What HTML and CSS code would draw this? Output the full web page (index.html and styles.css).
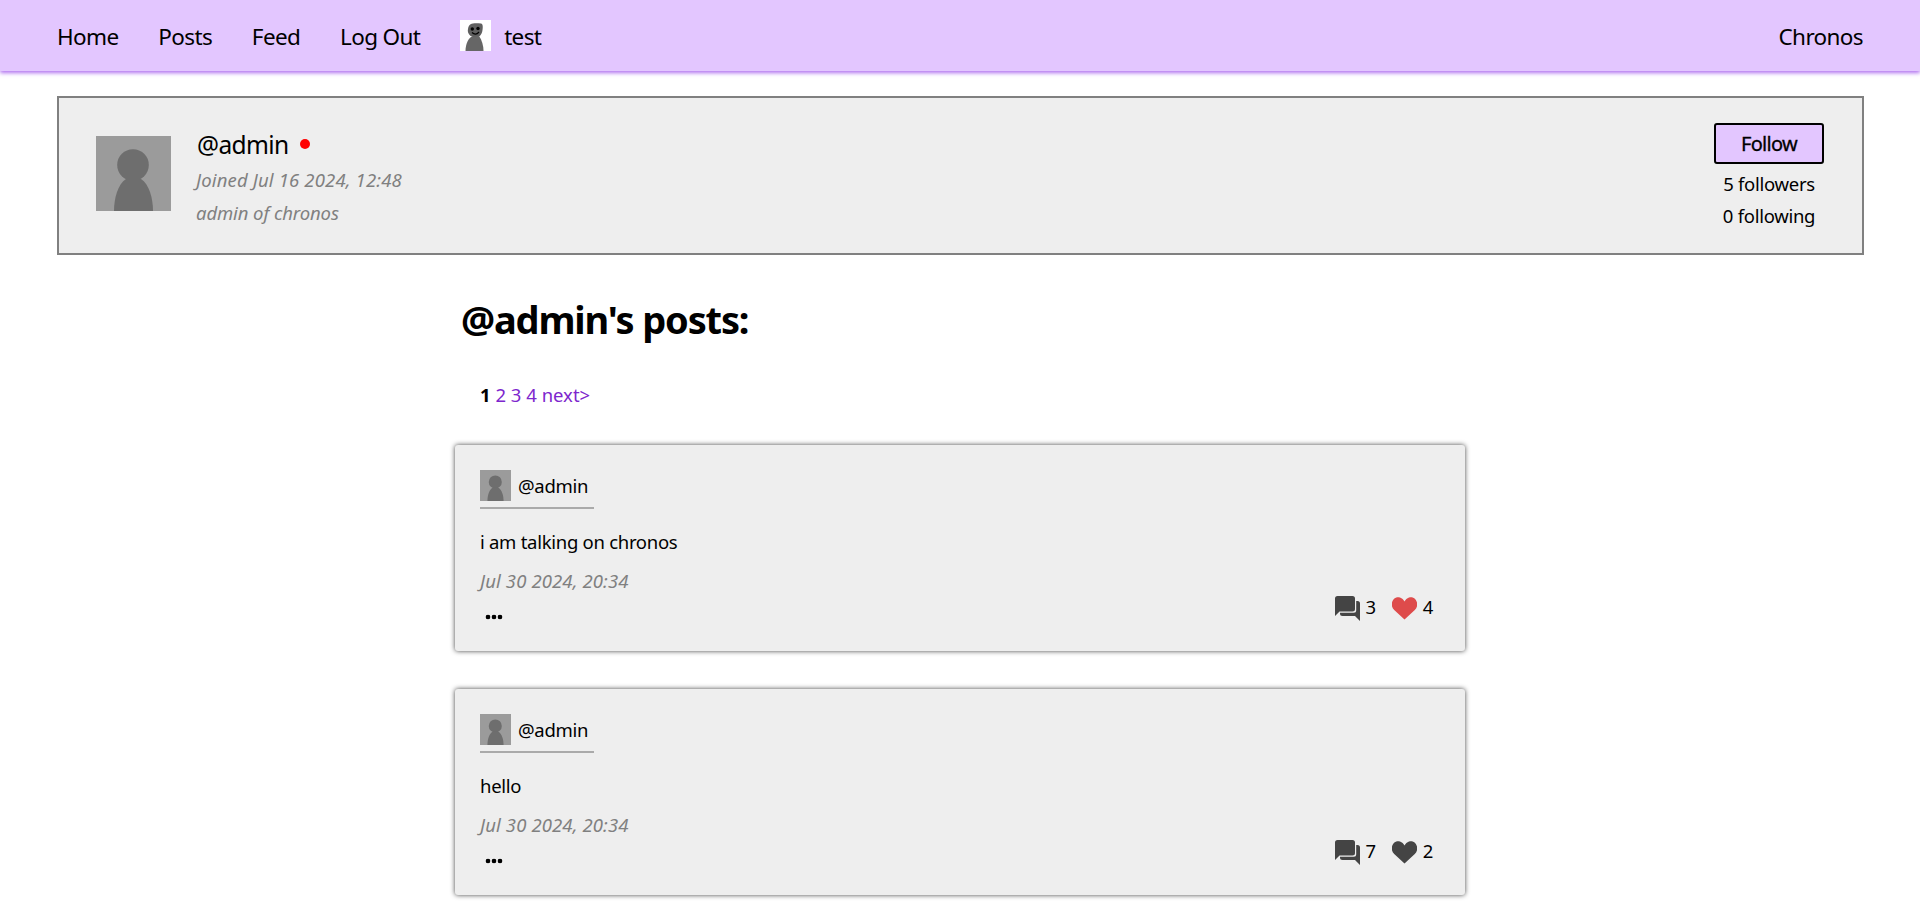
FILE: index.html
```html
<!DOCTYPE html>
<html lang="en">
<head>
<meta charset="utf-8">
<title>Chronos</title>
<link rel="stylesheet" href="styles.css">
</head>
<body>
<svg class="defs" aria-hidden="true">
  <symbol id="person" viewBox="0 0 75 75">
    <rect width="75" height="75" fill="#9b9b9b"/>
    <circle cx="37" cy="29" r="15.800" fill="#6e6e6e"/>
    <path d="M30 43C22 48 18 62 18 75H57C57 62 53 48 45 43Z" fill="#6e6e6e"/>
  </symbol>
  <symbol id="forum" viewBox="0 0 25 25">
    <path d="M2.500 0H17.500Q20 0 20 2.500V13Q20 15.500 17.500 15.500H4.500L0 20V2.500Q0 0 2.500 0Z"/>
    <path d="M21.200 5H22.500Q25 5 25 7.500V25L20 20H7.500Q5 20 5 17.500V16.700H18.700Q21.200 16.700 21.200 14.200Z"/>
  </symbol>
  <symbol id="heart" viewBox="0 0 25 23">
    <path d="M12.500 22.500L2.200 13.100C-3.600 7 2-1.800 8 .6C10 1.400 11.500 2.700 12.500 4.600C13.500 2.700 15 1.400 17 .6C23-1.800 28.600 7 22.800 13.100Z"/>
  </symbol>
</svg>
<header class="nav">
  <nav class="nav-links">
    <a>Home</a>
    <a>Posts</a>
    <a>Feed</a>
    <a>Log Out</a>
    <a class="nav-user">
      <svg class="nav-avatar" viewBox="0 0 31 31">
        <rect width="31" height="31" fill="#fff"/>
        <path d="M8 9C9 3 13 3 21 3.500C23 4 23 7 22.500 10C22 15 19 17.500 15 17.500C10 17 7 13 8 9Z" fill="#5f5f5f"/>
        <path d="M11 17C7 20 5.500 26 5.500 31H23.500C23.500 26 22 20 19 16Z" fill="#666"/>
        <circle cx="12.300" cy="9" r="1.700"/><circle cx="18" cy="8.500" r="1.700"/>
        <path d="M12 12.500Q15.500 16 19 12" fill="none" stroke="#000" stroke-width="1.200"/>
      </svg>
      <span>test</span>
    </a>
  </nav>
  <a class="brand">Chronos</a>
</header>
<section class="profile">
  <svg class="profile-avatar"><use href="#person"/></svg>
  <div class="profile-info">
    <div class="profile-name"><span>@admin</span><i class="status"></i></div>
    <p class="joined">Joined Jul 16 2024, 12:48</p>
    <p class="bio">admin of chronos</p>
  </div>
  <div class="profile-side">
    <button class="follow">Follow</button>
    <p class="followers">5 followers</p>
    <p class="following">0 following</p>
  </div>
</section>
<main class="posts">
  <h1>@admin's posts:</h1>
  <div class="pages"><b>1</b> <a>2</a> <a>3</a> <a>4</a> <a>next&gt;</a></div>
  <article class="post">
    <a class="author"><svg class="post-avatar"><use href="#person"/></svg><span>@admin</span></a>
    <p class="text">i am talking on chronos</p>
    <p class="date">Jul 30 2024, 20:34</p>
    <div class="post-foot">
      <span class="more"><i></i><i></i><i></i></span>
      <div class="actions">
        <svg class="chat"><use href="#forum"/></svg><span>3</span>
        <svg class="like liked"><use href="#heart"/></svg><span>4</span>
      </div>
    </div>
  </article>
  <article class="post">
    <a class="author"><svg class="post-avatar"><use href="#person"/></svg><span>@admin</span></a>
    <p class="text">hello</p>
    <p class="date">Jul 30 2024, 20:34</p>
    <div class="post-foot">
      <span class="more"><i></i><i></i><i></i></span>
      <div class="actions">
        <svg class="chat"><use href="#forum"/></svg><span>7</span>
        <svg class="like"><use href="#heart"/></svg><span>2</span>
      </div>
    </div>
  </article>
</main>
</body>
</html>
```
FILE: styles.css
```css
* { box-sizing: border-box; }
body {
  margin: 0;
  height: 913px;
  overflow: hidden;
  background: #fff;
  color: #000;
  font: 18.5px/24px "Noto Sans", "Open Sans", sans-serif;
  letter-spacing: -.28px;
}
p, h1 { margin: 0; }
svg { display: block; flex: none; }
.defs { width: 0; height: 0; position: absolute; }
.nav {
  display: flex;
  justify-content: space-between;
  height: 71px;
  padding: 20px 57px 0 57px;
  background: #e3c6ff;
  box-shadow: 0 2px 4px #b070f0;
  font-size: 22.5px;
  line-height: 34px;
  letter-spacing: -.63px;
}
.nav-links { display: flex; gap: 39.8px; }
.nav-user { display: flex; gap: 13px; }
.nav-avatar { width: 31px; height: 31px; }
.profile {
  display: flex;
  height: 159px;
  margin: 25px 56px 0 57px;
  padding: 0 38px 0 37px;
  border: 2px solid #808080;
  background: #eee;
}
.profile-avatar { width: 75px; height: 75px; margin-top: 38px; }
.profile-info { flex: 1; padding: 30px 0 0 25px; }
.profile-name { display: flex; gap: 11px; padding-left: 1px; font-size: 24.5px; line-height: 34px; letter-spacing: -.6px; }
.status { width: 10px; height: 10px; margin-top: 11px; border-radius: 50%; background: #f00; }
.joined, .bio { color: #808080; font-style: italic; line-height: 33px; }
.joined { margin-top: 1px; letter-spacing: .15px; }
.bio { letter-spacing: -.1px; }
.profile-side { width: 110px; padding-top: 25px; text-align: center; white-space: nowrap; }
.follow {
  width: 110px;
  height: 41px;
  padding: 1px 0 0;
  border: 2px solid #000;
  border-radius: 3px;
  background: #e3c6ff;
  font: 400 20px/36px "Noto Sans", sans-serif;
  letter-spacing: -.7px;
  -webkit-text-stroke: .3px #000;
}
.profile-side p { line-height: 32px; }
.followers { margin-top: 4px; }
.posts { width: 1010px; margin: 0 auto; }
h1 { padding: 37px 0 0 6px; font-size: 38px; line-height: 54px; letter-spacing: -1.15px; }
.pages { height: 48px; margin: 37px 0 14px; padding: 0 25px; letter-spacing: 0; }
.pages a { color: #7d26cd; }
.post {
  height: 206px;
  margin-bottom: 38px;
  padding: 25px 32px 0 25px;
  border-radius: 3px;
  background: #eee;
  box-shadow: 0 0 5px #444;
}
.author { display: flex; gap: 7px; width: 114px; height: 39px; border-bottom: 2px solid #aaa; line-height: 32px; }
.post-avatar { width: 31px; height: 31px; }
.text { margin-top: 21px; line-height: 24px; }
.date { margin-top: 15px; color: #808080; font-style: italic; letter-spacing: .12px; }
.post-foot { display: flex; justify-content: space-between; }
.more { display: flex; gap: 2px; padding: 22px 0 0 6px; }
.more i { width: 4px; height: 4px; border-radius: 50%; background: #000; box-shadow: 0 0 0 .3px #000; }
.actions { display: flex; padding-top: 2px; line-height: 23px; fill: #444; }
.chat { width: 25px; height: 25px; margin: 1px 5px 0 0; }
.like { width: 25px; height: 23px; margin: 2px 6px 0 16px; }
.liked { fill: #de4b4b; }
```
